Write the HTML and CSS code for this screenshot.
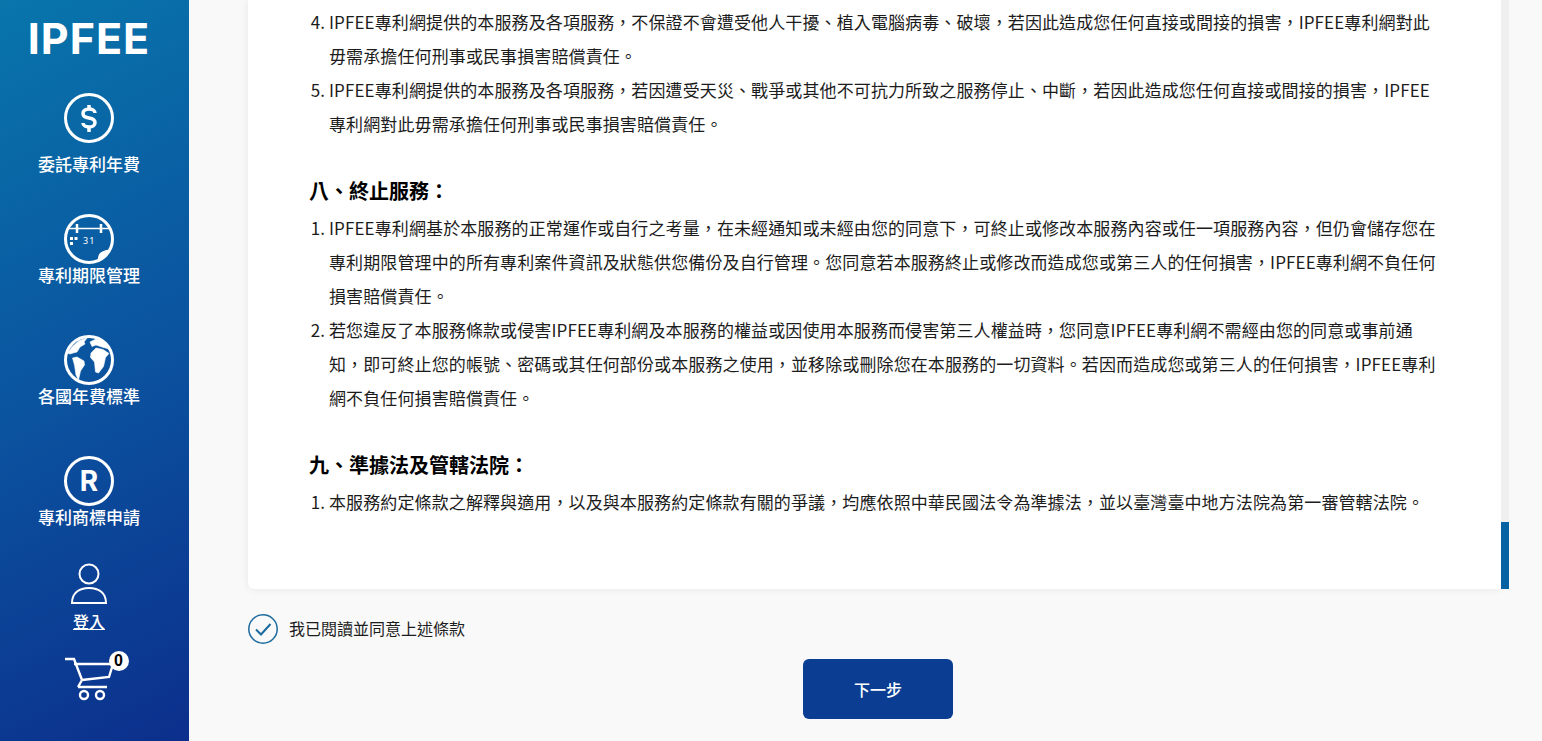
FILE: index.html
```html
<!DOCTYPE html>
<html lang="zh-Hant">
<head>
<meta charset="utf-8">
<title>IPFEE</title>
<link rel="stylesheet" href="styles.css">
</head>
<body>
<div class="layout">
  <aside class="sidebar">
    <div class="logo">IPFEE</div>
    <a class="nav-item nav-item-first">
      <svg class="nav-icon" viewBox="0 0 50 50"><circle class="ring" cx="25" cy="25" r="23.5"/><path class="dollar" d="M31 20c0-2.400-2.500-4-6-4s-6 1.800-6 4.500 2.500 4 6 4.500 6 2 6 4.700-2.500 4.300-6 4.300-6-1.600-6-4M25 12v4M25 34v5"/></svg>
      <span class="nav-label">委託專利年費</span>
    </a>
    <a class="nav-item">
      <svg class="nav-icon" viewBox="0 0 50 50"><circle class="ring" cx="25" cy="25" r="23.500"/><path class="thin" d="M3 14.500h44"/><path class="tick" d="M13 10v9M37 10v9"/><path class="solid" d="M6 23h3v3H6zM10.500 23h3v3h-3zM6 28h3v3H6zM34 47.500C33 40 37 36 47 35.500A23.500 23.500 0 0 1 34 47.500z"/><text class="cal-num" x="19" y="29.500">31</text></svg>
      <span class="nav-label">專利期限管理</span>
    </a>
    <a class="nav-item">
      <svg class="nav-icon" viewBox="0 0 50 50"><circle class="ring" cx="25" cy="25" r="23.500"/><path class="solid land" d="M3.500 18 8 12 15 5.500 23 3l-3 4 1 2-5 3-3 5-4 1-3 1zM8.500 23l4.500-1 7 4 .5 4-4 6-2 9-2.500-5-1.500-10zM27 18l5-5 7 1.500 6 4-3.500 4-2 9-5 6.500-3-1-1-10-4-4.500zM26 7l6-3 6 1.500 7 8.500-7-2-6-2-4 1.500z"/></svg>
      <span class="nav-label">各國年費標準</span>
    </a>
    <a class="nav-item">
      <svg class="nav-icon" viewBox="0 0 50 50"><circle class="ring" cx="25" cy="25" r="23.500"/><text class="reg" x="25" y="35">R</text></svg>
      <span class="nav-label">專利商標申請</span>
    </a>
    <a class="login">
      <svg class="user-icon" viewBox="0 0 36 42"><circle class="line" cx="18" cy="11" r="9.500"/><path class="line" d="M1 40c0-10 7-15 17-15s17 5 17 15z"/></svg>
      <span class="login-label">登入</span>
    </a>
    <a class="cart">
      <svg class="cart-icon" viewBox="0 0 50 50"><path class="cart-line" d="M1 7h9l8 21-4 7M10 12h39l-4 13-27 3M14 35h29"/><circle class="cart-line" cx="20" cy="43" r="4"/><circle class="cart-line" cx="36" cy="43" r="4"/></svg>
      <span class="badge">0</span>
    </a>
  </aside>
  <main class="main">
    <div class="panel">
      <div class="card">
        <ol start="4" class="terms">
          <li>IPFEE專利網提供的本服務及各項服務，不保證不會遭受他人干擾、植入電腦病毒、破壞，若因此造成您任何直接或間接的損害，IPFEE專利網對此毋需承擔任何刑事或民事損害賠償責任。</li>
          <li>IPFEE專利網提供的本服務及各項服務，若因遭受天災、戰爭或其他不可抗力所致之服務停止、中斷，若因此造成您任何直接或間接的損害，IPFEE專利網對此毋需承擔任何刑事或民事損害賠償責任。</li>
        </ol>
        <h2 class="section-title">八、終止服務：</h2>
        <ol class="terms">
          <li>IPFEE專利網基於本服務的正常運作或自行之考量，在未經通知或未經由您的同意下，可終止或修改本服務內容或任一項服務內容，但仍會儲存您在專利期限管理中的所有專利案件資訊及狀態供您備份及自行管理。您同意若本服務終止或修改而造成您或第三人的任何損害，IPFEE專利網不負任何損害賠償責任。</li>
          <li>若您違反了本服務條款或侵害IPFEE專利網及本服務的權益或因使用本服務而侵害第三人權益時，您同意IPFEE專利網不需經由您的同意或事前通知，即可終止您的帳號、密碼或其任何部份或本服務之使用，並移除或刪除您在本服務的一切資料。若因而造成您或第三人的任何損害，IPFEE專利網不負任何損害賠償責任。</li>
        </ol>
        <h2 class="section-title">九、準據法及管轄法院：</h2>
        <ol class="terms">
          <li>本服務約定條款之解釋與適用，以及與本服務約定條款有關的爭議，均應依照中華民國法令為準據法，並以臺灣臺中地方法院為第一審管轄法院。</li>
        </ol>
      </div>
      <div class="scrollbar"><div class="thumb"></div></div>
    </div>
    <label class="agree">
      <svg class="check" viewBox="0 0 30 30"><circle class="check-ring" cx="15" cy="15" r="14.200"/><path class="check-mark" d="M8 15.500l5 5L22.500 10"/></svg>
      <span class="agree-text">我已閱讀並同意上述條款</span>
    </label>
    <div class="actions"><button class="next" type="button">下一步</button></div>
  </main>
</div>
</body>
</html>
```
FILE: styles.css
```css
* { box-sizing: border-box; }
html, body { margin: 0; height: 100%; overflow: hidden; }
body {
  font-family: "Noto Sans CJK TC", "Noto Sans", sans-serif;
  background: #f9f9f9;
  color: #222;
}
.layout { display: flex; height: 741px; }

.sidebar {
  width: 189px;
  flex: none;
  display: flex;
  flex-direction: column;
  align-items: center;
  padding: 22px 11px 0 0;
  color: #fff;
  background: linear-gradient(152deg, #0875ab 0%, #0b509e 55%, #0c2f8c 100%);
}
.logo {
  font-family: Inter, "Liberation Sans", sans-serif;
  font-weight: 700;
  font-size: 43px;
  line-height: 33px;
  height: 31px;
  letter-spacing: 1px;
  margin-bottom: 40px;
}
.nav-item {
  display: flex;
  flex-direction: column;
  align-items: center;
  height: 73px;
  margin-bottom: 48px;
}
.nav-item-first { height: 83px; margin-bottom: 38px; }
.nav-item-first .nav-label { margin-top: 9px; }
.nav-icon { width: 50px; height: 50px; flex: none; display: block; }
.nav-label {
  margin-top: -1px;
  font-size: 17px;
  line-height: 24px;
  font-weight: 500;
  white-space: nowrap;
}
.ring { fill: none; stroke: #fff; stroke-width: 3; }
.dollar { fill: none; stroke: #fff; stroke-width: 3.500; }
.thin { stroke: #fff; stroke-width: 1.500; }
.tick { stroke: #fff; stroke-width: 2.500; }
.solid { fill: #fff; }
.land { stroke: #fff; stroke-width: 0.600; stroke-linejoin: round; }
.cal-num { fill: #fff; font-family: "Noto Sans", sans-serif; font-size: 9px; letter-spacing: 1px; }
.reg { fill: #fff; font-family: Inter, sans-serif; font-weight: 700; font-size: 28px; text-anchor: middle; }

.login {
  margin-top: -14px;
  display: flex;
  flex-direction: column;
  align-items: center;
}
.user-icon { width: 36px; height: 42px; display: block; }
.line { fill: none; stroke: #fff; stroke-width: 2; }
.login-label {
  margin-top: 5px;
  font-size: 16px;
  line-height: 22px;
  font-weight: 500;
  text-decoration: underline;
}
.cart { position: relative; margin-top: 20px; width: 50px; height: 50px; margin-left: -1px; }
.cart-icon { width: 50px; height: 50px; display: block; }
.cart-line { fill: none; stroke: #fff; stroke-width: 2.400; }
.badge {
  position: absolute;
  right: -15px;
  top: -1px;
  width: 20px;
  height: 20px;
  border-radius: 50%;
  background: #fff;
  color: #000;
  font-family: "Liberation Sans", sans-serif;
  font-weight: 700;
  font-size: 16px;
  line-height: 19px;
  text-align: center;
}

.main { flex: 1; min-width: 0; padding-left: 59px; }
.panel {
  display: flex;
  width: 1261px;
  height: 589px;
}
.card {
  flex: 1;
  min-width: 0;
  background: #fff;
  border-radius: 0 0 0 6px;
  box-shadow: 0 0 10px rgba(0, 0, 0, 0.08);
  padding: 5px 63px 0 61px;
  font-size: 17px;
  line-height: 34px;
  letter-spacing: 0.110px;
  color: #1c1c1c;
}
.scrollbar {
  width: 8px;
  flex: none;
  background: #efefef;
  display: flex;
  flex-direction: column;
  justify-content: flex-end;
}
.thumb { height: 67px; background: #0762a3; }
.terms { margin: 0; padding-left: 20px; }
.section-title {
  margin: 33px 0 3px;
  font-size: 20px;
  line-height: 34px;
  font-weight: 700;
  letter-spacing: 0;
  color: #000;
}
.agree {
  display: flex;
  align-items: center;
  gap: 11px;
  margin-top: 25px;
  height: 30px;
  font-size: 16px;
  color: #1c1c1c;
}
.agree-text { margin-top: -2px; }
.check { width: 30px; height: 30px; flex: none; display: block; }
.check-ring { fill: none; stroke: #1c6a9e; stroke-width: 1.500; }
.check-mark { fill: none; stroke: #1c6a9e; stroke-width: 2; }
.actions { display: flex; justify-content: center; width: 1261px; margin-top: 15px; padding-right: 1px; }
.next {
  width: 150px;
  height: 60px;
  border: 0;
  border-radius: 6px;
  background: #0b3e92;
  color: #fff;
  font-family: inherit;
  font-size: 16px;
  font-weight: 500;
}
```
